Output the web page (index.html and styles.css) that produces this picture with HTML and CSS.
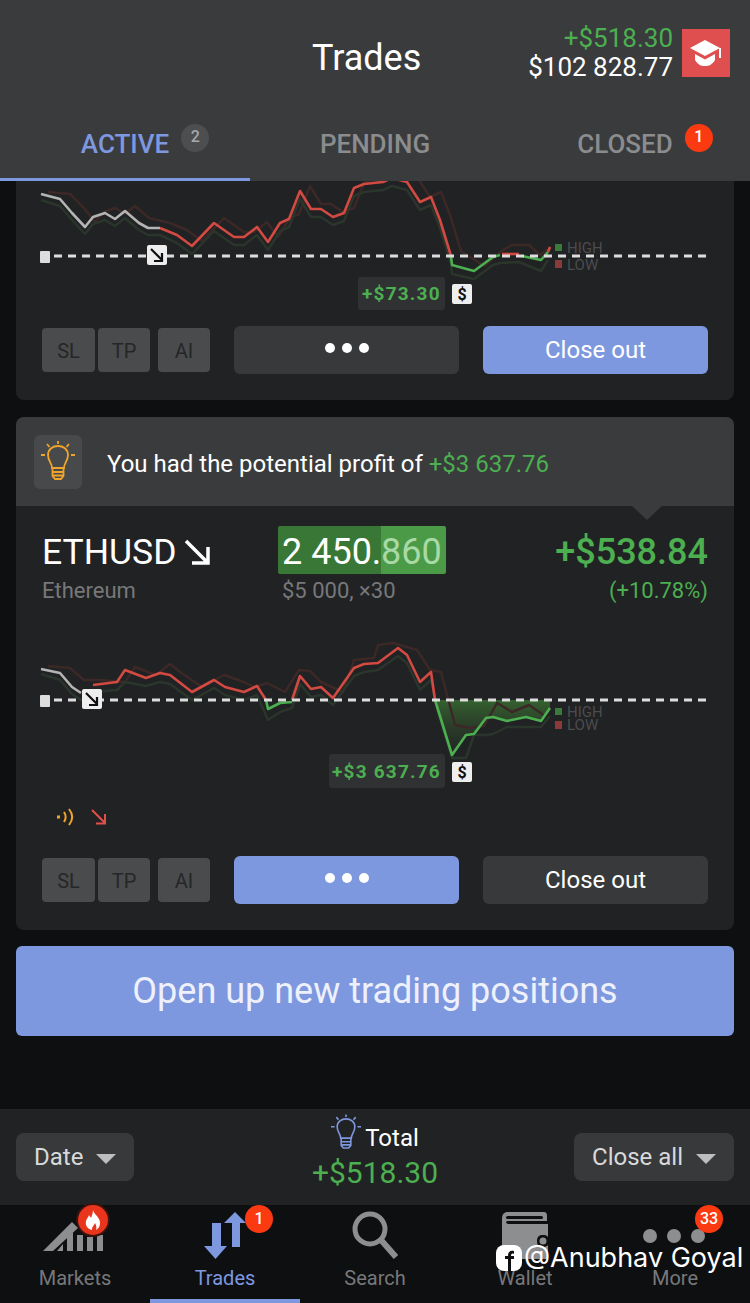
FILE: index.html
```html
<!DOCTYPE html>
<html lang="en">
<head>
    <meta charset="UTF-8">
    <meta name="viewport" content="width=device-width, initial-scale=1.0">
    <title>Trades</title>
    <link rel="stylesheet" href="styles.css">
</head>
<body>
    <header class="top">
        <div class="top-row">
            <h1 class="title">Trades</h1>
            <div class="balance">
                <div class="green">+$518.30</div>
                <div>$102 828.77</div>
            </div>
            <div class="school">
                <svg width="34" height="30" viewBox="0 0 34 30">
                    <path d="M16 2 L31 10 L16 18 L1 10 Z" fill="#fff"/>
                    <path d="M6 16 L16 21.500 L26 16 V22 C23 27 20 28 16 28 C12 28 9 27 6 22 Z" fill="#fff"/>
                    <path d="M31 10 V20" stroke="#fff" stroke-width="2" fill="none"/>
                </svg>
            </div>
        </div>
        <nav class="tabs">
            <div class="tab active"><span class="tab-label">ACTIVE<i class="count grey">2</i></span></div>
            <div class="tab"><span class="tab-label">PENDING</span></div>
            <div class="tab"><span class="tab-label">CLOSED<i class="count red">1</i></span></div>
        </nav>
    </header>

    <main class="list">
        <section class="card first">
            <svg class="chart chart-a" viewBox="16 181 718 135" width="718" height="135">
                <g class="ghost">
                    <polyline class="ghost-high" points="48,192 70,194 84,208 95,222 104,212 115,208 125,214 135,206 149,218 170,223 187,230 202,241 224,218 244,232 254,232 267,222 278,237 290,218 299,214 310,186 321,204 331,204 343,212 354,208 364,183 374,179 393,177 402,175 417,177 430,197 441,192 450,215 461,251 484,266 503,250 512,245 529,245 540,255 551,247"/>
                    <polyline class="ghost-low" points="41,200 60,206 72,220 85,234 93,224 105,220 115,226 125,218 139,230 148,235 160,235 177,243 192,254 214,231 234,245 244,245 257,235 268,250 280,231 289,227 300,199 311,217 321,217 333,225 344,221 354,196 364,192 383,190 392,186 407,190 420,210 431,205 440,228 451,264 452,274 474,279 493,265 500,263 519,262 541,271 548,260"/>
                </g>
                <g class="series">
                    <polyline class="flat" points="41,194 60,199 72,213 85,227 93,217 105,213 115,219 125,211 139,223 148,228 160,228"/>
                    <polyline class="loss" points="160,228 177,235 192,246 214,223 234,237 244,237 257,227 268,242 280,223 289,219 300,191 311,209 321,209 333,217 344,213 354,188 364,184 383,182 392,178 407,182 420,202 431,197 440,220 451,256"/>
                    <polyline class="gain" points="451,256 452,265 474,271 493,257 500,255"/>
                    <polyline class="loss" points="502,254 519,254"/>
                    <polyline class="gain" points="522,256 541,260 548,252"/>
                    <polyline class="loss" points="548,252 550,247"/>
                </g>
                <line class="base" x1="54" y1="256" x2="706" y2="256"/>
                <rect x="40" y="251" width="10" height="12" rx="1" fill="#ddd"/>
                <rect x="147" y="245" width="20" height="20" rx="2" fill="#eee"/>
                <path d="M151 249 L162 260 M162 253 V261 H154" stroke="#111" stroke-width="2.200" fill="none"/>
                <rect x="555" y="244" width="7" height="7" fill="#3a7a3a"/>
                <rect x="555" y="260" width="7" height="8" fill="#8a3a38"/>
                <text class="legend" x="567" y="253">HIGH</text>
                <text class="legend" x="567" y="270">LOW</text>
                <rect x="358" y="277" width="87" height="33" rx="3" fill="#303133"/>
                <text class="tip" x="362" y="300">+$73.30</text>
                <rect x="452" y="284" width="20" height="20" rx="2" fill="#eee"/>
                <text class="dollar" x="462" y="300">$</text>
            </svg>
            <div class="actions">
                <div class="keys">
                    <span class="key join">SL</span><span class="key">TP</span><span class="key ai">AI</span>
                </div>
                <button class="btn dark"><i class="dots"><b></b><b></b><b></b></i></button>
                <button class="btn blue">Close out</button>
            </div>
        </section>

        <section class="card second">
            <div class="hint">
                <div class="hint-icon">
                    <svg width="34" height="42" viewBox="0 0 34 42" fill="none" stroke="#f0a52a" stroke-width="1.800">
                        <path d="M11 27 C11 22 7 20 7 14 C7 8 12 5 17 5 C22 5 27 8 27 14 C27 20 23 22 23 27 Z"/>
                        <path d="M11.500 27 H22.500 V35 L20 38 H14 L11.500 35 Z M12 31 H22 M12 34.500 H22"/>
                        <path d="M17 0 V3 M6 3 L8.500 6 M28 3 L25.500 6 M0 14 H4 M30 14 H34"/>
                    </svg>
                </div>
                <p>You had the potential profit of <span class="green">+$3 637.76</span></p>
            </div>
            <div class="info">
                <div>
                    <div class="symbol">ETHUSD
                        <svg width="28" height="28" viewBox="0 0 28 28" fill="none" stroke="#fff" stroke-width="3.500"><path d="M2 3 L24 25 M24 9 V25 H8"/></svg>
                    </div>
                    <div class="sub">Ethereum</div>
                </div>
                <div class="middle">
                    <div class="price"><span class="price-a">2 450.</span><span class="price-b">860</span></div>
                    <div class="sub">$5 000, ×30</div>
                </div>
                <div class="profit">
                    <div class="amount">+$538.84</div>
                    <div class="sub green">(+10.78%)</div>
                </div>
            </div>
            <svg class="chart chart-b" viewBox="16 630 718 170" width="718" height="170">
                <defs>
                    <linearGradient id="gainfill" x1="0" y1="0" x2="0" y2="1">
                        <stop offset="0" stop-color="#35622f"/>
                        <stop offset="1" stop-color="#2a3a28" stop-opacity=".2"/>
                    </linearGradient>
                </defs>
                <polygon fill="url(#gainfill)" points="435,700 550,700 550,708 541,721 526,717 507,721 493,717 486,718 474,734 466,735 452,755"/>
                <g class="ghost">
                    <polyline class="ghost-high" points="48,666 70,668 84,680 100,680 125,682 135,667 156,675 170,664 180,672 202,687 224,675 244,682 254,687 267,683 285,692 299,670 310,671 321,682 343,692 354,660 374,658 378,645 393,643 417,650 430,670 441,672 455,725 470,728 484,726 497,703 512,712 529,705 545,716"/>
                    <polyline class="ghost-low" points="41,674 60,680 72,694 81,700 93,692 117,690 125,682 146,686 160,682 170,684 192,700 214,688 225,695 244,700 257,695 268,720 280,712 292,708 300,684 311,697 321,695 333,705 354,676 364,672 378,670 398,656 407,663 420,690 431,680 438,712 452,758 466,758 474,735 486,735 493,734 507,727 526,727 541,727 550,716"/>
                </g>
                <g class="series">
                    <polyline class="flat" points="41,669 60,673 72,687 81,693"/>
                    <polyline class="loss" points="93,685 117,682 125,670 146,678 160,673 170,675 192,692 214,680 225,687 244,692 257,686 266,700"/>
                    <polyline class="gain" points="266,700 268,709 280,703 292,702"/>
                    <polyline class="loss" points="292,700 300,676 311,689 321,687 333,698 354,668 364,664 378,663 398,648 407,655 420,682 431,672 435,700"/>
                    <polyline class="gain" points="435,700 452,755 466,735 474,734 486,718 493,717 507,721 526,717 541,721 550,708"/>
                </g>
                <line class="base" x1="54" y1="700" x2="706" y2="700"/>
                <rect x="40" y="695" width="10" height="12" rx="1" fill="#ddd"/>
                <rect x="82" y="689" width="20" height="20" rx="2" fill="#eee"/>
                <path d="M86 693 L97 704 M97 697 V705 H89" stroke="#111" stroke-width="2.200" fill="none"/>
                <rect x="555" y="708" width="7" height="7" fill="#3a7a3a"/>
                <rect x="555" y="721" width="7" height="8" fill="#8a3a38"/>
                <text class="legend" x="567" y="717">HIGH</text>
                <text class="legend" x="567" y="730">LOW</text>
                <rect x="329" y="754" width="116" height="34" rx="3" fill="#303133"/>
                <text class="tip" x="332" y="778">+$3 637.76</text>
                <rect x="452" y="762" width="20" height="20" rx="2" fill="#eee"/>
                <text class="dollar" x="462" y="778">$</text>
            </svg>
            <div class="signal">
                <svg width="20" height="18" viewBox="0 0 20 18" fill="none" stroke="#f0a52a" stroke-width="2"><rect x="1" y="7.500" width="3" height="3" fill="#f0a52a" stroke="none"/><path d="M8 4 C10 7 10 11 8 14 M13 1 C17 6 17 12 13 17"/></svg>
                <svg width="18" height="18" viewBox="0 0 18 18" fill="none" stroke="#e0504a" stroke-width="2"><path d="M2 2 L15 15 M15 6 V15.500 H6"/></svg>
            </div>
            <div class="actions">
                <div class="keys">
                    <span class="key join">SL</span><span class="key">TP</span><span class="key ai">AI</span>
                </div>
                <button class="btn blue"><i class="dots"><b></b><b></b><b></b></i></button>
                <button class="btn dark">Close out</button>
            </div>
        </section>

        <button class="open-new">Open up new trading positions</button>
    </main>

    <section class="totals">
        <button class="select">Date<i class="caret"></i></button>
        <div class="total-mid">
            <div class="total-label">
                <svg class="total-bulb" width="30" height="38" viewBox="0 0 34 42" fill="none" stroke="#7e98e0" stroke-width="1.800">
                    <path d="M11 27 C11 22 7 20 7 14 C7 8 12 5 17 5 C22 5 27 8 27 14 C27 20 23 22 23 27 Z"/>
                    <path d="M11.500 27 H22.500 V35 L20 38 H14 L11.500 35 Z M12 31 H22 M12 34.500 H22"/>
                    <path d="M17 0 V3 M6 3 L8.500 6 M28 3 L25.500 6 M0 14 H4 M30 14 H34"/>
                </svg>
                Total
            </div>
            <div class="total-value green">+$518.30</div>
        </div>
        <button class="select">Close all<i class="caret"></i></button>
    </section>

    <nav class="bottom">
        <div class="nav-item">
            <svg class="nav-icon" width="64" height="48" viewBox="0 0 64 48" fill="#8d8e90">
                <path d="M0 40 L29 11 L35 17 L10 40 Z"/>
                <path d="M14 40 L20 33 V40 Z M24 40 V26 L30 21 V40 Z M34 40 V24 H40 V40 Z M44 40 V26 H50 V40 Z M54 40 V24 H60 V40 Z"/>
            </svg>
            <span class="nav-label">Markets</span>
            <i class="badge fire">
                <svg width="18" height="21" viewBox="0 0 18 21"><path d="M9 0 C10 4 13 5 15 9 C17 13 16 18 12 20 C13 17 12 15 11 13 C10 16 8 16 8 20 C4 19 1 16 2 11 C3 8 4 8 5 5 C6 7 7 7 7 8 C8 5 9 3 9 0 Z" fill="#fff"/></svg>
            </i>
        </div>
        <div class="nav-item active">
            <svg class="nav-icon" width="44" height="48" viewBox="0 0 44 48" fill="#7e98e0">
                <path d="M9 12 H18 V35 H24 L12.500 48 L1 35 H9 Z"/>
                <path d="M21 12 L32 1 L43 12 H37 V36 H29 V12 Z"/>
            </svg>
            <span class="nav-label">Trades</span>
            <i class="badge">1</i>
        </div>
        <div class="nav-item">
            <svg class="nav-icon" width="46" height="48" viewBox="0 0 46 48" fill="none" stroke="#8d8e90">
                <circle cx="18" cy="18" r="15" stroke-width="5"/>
                <path d="M29 29 L44 46" stroke-width="6"/>
            </svg>
            <span class="nav-label">Search</span>
        </div>
        <div class="nav-item">
            <svg class="nav-icon" width="50" height="48" viewBox="0 0 50 48">
                <path d="M2 8 C2 3 4 1 8 1 H44 C46 1 47 2 47 5 V10 H8 C6 10 5 12 8 13 H48 V48 H8 C4 48 2 46 2 42 Z" fill="#8d8e90"/>
                <rect x="6" y="5" width="37" height="3" rx="1.500" fill="#0e0f10"/>
                <rect x="37" y="24" width="12" height="12" rx="5" fill="#0e0f10"/>
                <circle cx="43" cy="30" r="3.500" fill="#8d8e90"/>
            </svg>
            <span class="nav-label">Wallet</span>
        </div>
        <div class="nav-item">
            <div class="nav-icon more"><b></b><b></b><b></b></div>
            <span class="nav-label">More</span>
            <i class="badge">33</i>
        </div>
        <div class="mark">
            <svg width="26" height="26" viewBox="0 0 26 26">
                <rect width="26" height="26" rx="8" fill="#fff"/>
                <path d="M18 6 C14 5 12 7 12 11 H9 V14 H12 V26 H15 V14 H18 V11 H15 C15 9 16 8 18 9 Z" fill="#0e0f10"/>
            </svg>
            <span>@Anubhav Goyal</span>
        </div>
    </nav>
</body>
</html>
```

FILE: styles.css
```css
* {
    box-sizing: border-box;
}
html, body {
    margin: 0;
    padding: 0;
}
body {
    width: 750px;
    height: 1303px;
    overflow: hidden;
    display: flex;
    flex-direction: column;
    background-color: #0e0f10;
    font-family: Roboto, sans-serif;
    color: #fff;
}
i {
    font-style: normal;
}
button {
    font-family: inherit;
    border: none;
    padding: 0;
}
.green {
    color: #4caf50;
}

/* header */
.top {
    height: 181px;
    flex: none;
    background-color: #3a3b3d;
}
.top-row {
    height: 106px;
    display: flex;
    align-items: center;
    padding-left: 312px;
}
.title {
    margin: 10px 0 0;
    font-size: 36px;
    font-weight: 400;
}
.balance {
    margin-left: auto;
    text-align: right;
    font-size: 26px;
    line-height: 29px;
}
.school {
    width: 48px;
    height: 48px;
    margin: 0 20px 0 9px;
    background-color: #e04f4f;
    display: flex;
    align-items: center;
    justify-content: center;
}
.tabs {
    display: flex;
    height: 75px;
}
.tab {
    width: 250px;
    display: flex;
    align-items: center;
    justify-content: center;
    font-size: 26px;
    font-weight: 500;
    color: #8b8c8e;
}
.tab.active {
    color: #7e98e0;
    box-shadow: inset 0 -3px 0 #7e98e0;
}
.tab-label {
    position: relative;
}
.count {
    position: absolute;
    left: calc(100% + 12px);
    top: -5px;
    width: 28px;
    height: 28px;
    border-radius: 50%;
    font-size: 16px;
    line-height: 26px;
    text-align: center;
}
.count.grey {
    background-color: #4d4e50;
    color: #a8a9ab;
}
.count.red {
    background-color: #fb3a12;
    color: #fff;
}

/* scrolling list */
.list {
    flex: 1;
    min-height: 0;
    overflow: hidden;
    padding: 0 16px;
}
.card {
    width: 718px;
    background-color: #212224;
    border-radius: 8px;
}
.card.first {
    border-radius: 0 0 8px 8px;
    padding-bottom: 26px;
    margin-bottom: 17px;
}
.card.second {
    overflow: hidden;
    padding-bottom: 26px;
}
.chart {
    display: block;
}
.chart-a {
    margin-bottom: 10px;
}
.chart-b {
    margin-top: 24px;
}
.ghost polyline {
    fill: none;
    stroke-width: 2.500;
    stroke-linejoin: round;
}
.ghost-high {
    stroke: #3c2827;
}
.ghost-low {
    stroke: #2a352b;
}
.series polyline {
    fill: none;
    stroke-width: 2.600;
    stroke-linejoin: round;
}
.series .flat {
    stroke: #b4b4b4;
}
.series .loss {
    stroke: #d24a42;
}
.series .gain {
    stroke: #4caf50;
}
.base {
    stroke: #ddd;
    stroke-width: 3;
    stroke-dasharray: 8 6;
}
.legend {
    font-size: 15px;
    fill: #4b4c4e;
}
.tip {
    font-size: 19px;
    font-weight: 700;
    letter-spacing: 1.200px;
    fill: #4caf50;
}
.dollar {
    font-size: 16px;
    font-weight: 700;
    text-anchor: middle;
    fill: #111;
}
.actions {
    display: flex;
    align-items: center;
    padding: 0 26px;
}
.keys {
    display: flex;
    width: 168px;
    margin-right: 24px;
}
.key {
    width: 52px;
    height: 44px;
    background-color: #4a4b4d;
    color: #252628;
    border-radius: 4px;
    font-size: 20px;
    line-height: 46px;
    text-align: center;
}
.key.join {
    width: 53px;
    margin-right: 3px;
}
.key.ai {
    margin-left: 8px;
}
.btn {
    width: 225px;
    height: 48px;
    border-radius: 6px;
    font-size: 24px;
    color: #fff;
    display: flex;
    align-items: center;
    justify-content: center;
}
.btn + .btn {
    margin-left: 24px;
}
.btn.dark {
    background-color: #38393b;
}
.btn.blue {
    background-color: #7e98e0;
}
.dots {
    display: flex;
    gap: 7px;
    margin-top: -4px;
}
.dots b {
    width: 10px;
    height: 10px;
    border-radius: 50%;
    background-color: #fff;
}

/* potential profit hint */
.hint {
    position: relative;
    height: 89px;
    display: flex;
    align-items: center;
    padding-left: 18px;
    background-color: #3a3b3d;
}
.hint::after {
    content: "";
    position: absolute;
    left: 616px;
    top: 100%;
    border-left: 15px solid transparent;
    border-right: 15px solid transparent;
    border-top: 14px solid #3a3b3d;
}
.hint p {
    margin: 4px 0 0 25px;
    font-size: 24px;
}
.hint-icon {
    width: 48px;
    height: 54px;
    border-radius: 6px;
    background-color: #48494b;
    display: flex;
    align-items: center;
    justify-content: center;
}
.info {
    display: flex;
    padding: 20px 26px 0;
}
.symbol {
    height: 48px;
    display: flex;
    align-items: center;
    gap: 8px;
    padding-top: 4px;
    font-size: 35.500px;
    white-space: nowrap;
}
.sub {
    height: 30px;
    margin-top: 2px;
    font-size: 22px;
    line-height: 30px;
    color: #77787a;
}
.middle {
    position: absolute;
    left: 278px;
}
.price {
    display: flex;
    height: 48px;
    font-size: 36px;
    line-height: 53px;
    border-radius: 2px;
    overflow: hidden;
}
.price-a {
    width: 103px;
    padding-left: 4px;
    background-color: #387735;
    white-space: pre;
}
.price-b {
    width: 65px;
    background-color: #4b9a48;
    color: #a9d9a5;
}
.middle .sub {
    padding-left: 4px;
}
.profit {
    margin-left: auto;
    text-align: right;
}
.amount {
    height: 48px;
    font-size: 36px;
    line-height: 53px;
    font-weight: 500;
    color: #4caf50;
}
.profit .sub.green {
    color: #4caf50;
}
.signal {
    display: flex;
    align-items: center;
    gap: 14px;
    height: 18px;
    margin: 8px 0 30px;
    padding-left: 40px;
}
.open-new {
    display: block;
    width: 718px;
    height: 90px;
    margin-top: 16px;
    border-radius: 6px;
    background-color: #7e98e0;
    color: #eef1fb;
    font-size: 36px;
}

/* totals bar */
.totals {
    position: relative;
    height: 96px;
    flex: none;
    display: flex;
    align-items: center;
    justify-content: space-between;
    padding: 0 16px;
    background-color: #212224;
}
.select {
    height: 48px;
    padding: 0 18px;
    display: flex;
    align-items: center;
    border-radius: 8px;
    background-color: #38393b;
    color: #d8d9da;
    font-size: 24px;
}
.caret {
    margin-left: 13px;
    margin-top: 4px;
    border-left: 10px solid transparent;
    border-right: 10px solid transparent;
    border-top: 10px solid #bdbec0;
}
.total-mid {
    position: absolute;
    left: 0;
    right: 0;
    top: 14px;
    text-align: center;
}
.total-label {
    font-size: 24px;
    line-height: 30px;
    margin-left: 34px;
}
.total-bulb {
    position: absolute;
    left: 331px;
    top: -9px;
}
.total-value {
    font-size: 30px;
    line-height: 40px;
}

/* bottom tab bar */
.bottom {
    position: relative;
    height: 98px;
    flex: none;
    display: flex;
    background-color: #0e0f10;
}
.nav-item {
    position: relative;
    width: 150px;
    display: flex;
    flex-direction: column;
    align-items: center;
    padding-top: 6px;
    color: #77787a;
}
.nav-item.active {
    color: #7e98e0;
    border-bottom: 4px solid #7e98e0;
}
.nav-icon {
    display: block;
    height: 48px;
}
.nav-label {
    margin-top: 6px;
    font-size: 20px;
    line-height: 26px;
}
.more {
    display: flex;
    align-items: center;
    gap: 10px;
    padding-top: 2px;
    margin-right: 2px;
}
.more b {
    width: 14px;
    height: 14px;
    border-radius: 50%;
    background-color: #8d8e90;
}
.badge {
    position: absolute;
    left: 95px;
    top: 0;
    width: 28px;
    height: 28px;
    border-radius: 50%;
    background-color: #fb3a12;
    color: #fff;
    font-size: 16px;
    font-weight: 500;
    line-height: 28px;
    text-align: center;
}
.badge.fire {
    left: 78px;
    display: flex;
    align-items: center;
    justify-content: center;
    width: 30px;
    height: 30px;
    background-color: #e8351c;
    box-shadow: 0 0 0 2px #3a1410;
}
.mark {
    position: absolute;
    left: 496px;
    top: 36px;
    display: flex;
    align-items: center;
    gap: 2px;
    font-family: Inter, sans-serif;
    font-size: 27px;
    color: #fff;
    white-space: nowrap;
}
```
